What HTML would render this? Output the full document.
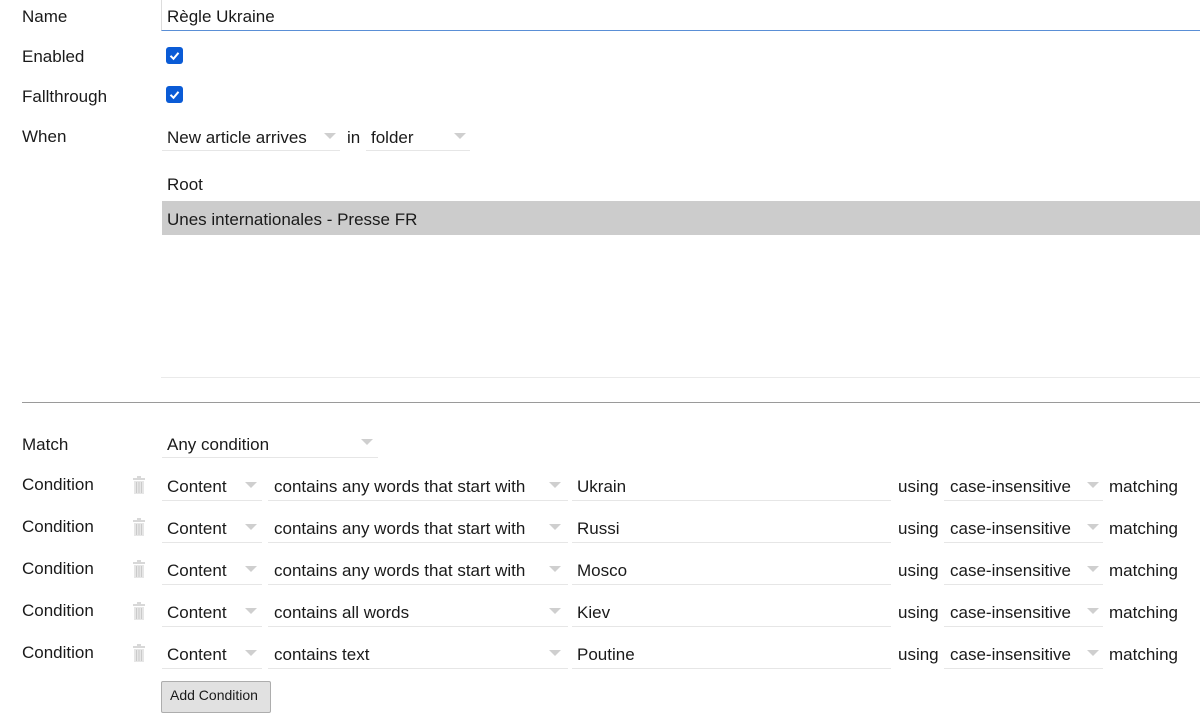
<!DOCTYPE html>
<html><head><meta charset="utf-8"><style>
body{margin:0;width:1200px;height:703px;overflow:hidden;background:#fff;font-family:"Liberation Sans",sans-serif;font-size:17px;color:#1a1a1a;position:relative}
.t{position:absolute;line-height:20px;white-space:nowrap}
.u{position:absolute;height:1px;background:#e6e6e6}
.a{position:absolute;width:0;height:0;border-left:6px solid transparent;border-right:6px solid transparent;border-top:6px solid #cfcfcf}
.cb{position:absolute;width:17px;height:17px;background:#0a5bd6;border-radius:3px}
.cb svg{position:absolute;left:0;top:0}
.tr{position:absolute}
</style></head><body>
<div class="t" style="left:22px;top:7px">Name</div>
<div style="position:absolute;left:161px;top:0;width:1039px;height:30px;border-left:1px solid #ddd;border-bottom:1px solid #5a8fd6"></div>
<div class="t" style="left:167px;top:7px">Règle Ukraine</div>
<div class="t" style="left:22px;top:47px">Enabled</div>
<div class="cb" style="left:166px;top:47px"><svg width="17" height="17"><path d="M4.5 8.8l3 3 5-6" stroke="#fff" stroke-width="2" fill="none"/></svg></div>
<div class="t" style="left:22px;top:87px">Fallthrough</div>
<div class="cb" style="left:166px;top:86px"><svg width="17" height="17"><path d="M4.5 8.8l3 3 5-6" stroke="#fff" stroke-width="2" fill="none"/></svg></div>
<div class="t" style="left:22px;top:127px">When</div>
<div class="t" style="left:167px;top:128px">New article arrives</div>
<div class="a" style="left:324px;top:133px"></div>
<div class="u" style="left:162px;top:150px;width:178px"></div>
<div class="t" style="left:347px;top:128px">in</div>
<div class="t" style="left:371px;top:128px">folder</div>
<div class="a" style="left:454px;top:133px"></div>
<div class="u" style="left:366px;top:150px;width:104px"></div>
<div class="t" style="left:167px;top:175px">Root</div>
<div style="position:absolute;left:162px;top:201px;width:1038px;height:34px;background:#cccccc"></div>
<div class="t" style="left:167px;top:210px">Unes internationales - Presse FR</div>
<div class="u" style="left:161px;top:377px;width:1039px;background:#eaeaea"></div>
<div style="position:absolute;left:22px;top:402px;width:1178px;height:1px;background:#9a9a9a"></div>
<div class="t" style="left:22px;top:435px">Match</div>
<div class="t" style="left:167px;top:435px">Any condition</div>
<div class="a" style="left:361px;top:439px"></div>
<div class="u" style="left:162px;top:457px;width:216px"></div>

<div id="rows"></div>
<script>
var rows=[["contains any words that start with","Ukrain"],["contains any words that start with","Russi"],["contains any words that start with","Mosco"],["contains all words","Kiev"],["contains text","Poutine"]];
var h="";
rows.forEach(function(r,i){var c=486+42*i;var ty=c-9;
h+='<div class="t" style="left:22px;top:'+(ty-2)+'px">Condition</div>';
h+='<svg class="tr" style="left:132px;top:'+(c-10)+'px" width="14" height="19"><rect x="1" y="2" width="12" height="2" fill="#d8d8d8"/><rect x="5" y="0" width="4" height="2" fill="#d8d8d8"/><rect x="2" y="5" width="10" height="13" fill="#e6e6e6"/><path d="M4.5 6v11M7 6v11M9.5 6v11" stroke="#cacaca"/></svg>';
h+='<div class="t" style="left:167px;top:'+ty+'px">Content</div><div class="a" style="left:245px;top:'+(c-4)+'px"></div><div class="u" style="left:162px;top:'+(c+14)+'px;width:100px"></div>';
h+='<div class="t" style="left:274px;top:'+ty+'px">'+r[0]+'</div><div class="a" style="left:549px;top:'+(c-4)+'px"></div><div class="u" style="left:268px;top:'+(c+14)+'px;width:300px"></div>';
h+='<div class="t" style="left:577px;top:'+ty+'px">'+r[1]+'</div><div class="u" style="left:572px;top:'+(c+14)+'px;width:319px"></div>';
h+='<div class="t" style="left:898px;top:'+ty+'px">using</div>';
h+='<div class="t" style="left:950px;top:'+ty+'px">case-insensitive</div><div class="a" style="left:1087px;top:'+(c-4)+'px"></div><div class="u" style="left:944px;top:'+(c+14)+'px;width:159px"></div>';
h+='<div class="t" style="left:1109px;top:'+ty+'px">matching</div>';
});
document.getElementById("rows").innerHTML=h;
</script>
<div style="position:absolute;left:161px;top:681px;width:108px;height:30px;border:1px solid #adadad;background:#e1e1e1;border-radius:2px"></div>
<div class="t" style="left:170px;top:685px;font-size:14px">Add Condition</div>
</body></html>
